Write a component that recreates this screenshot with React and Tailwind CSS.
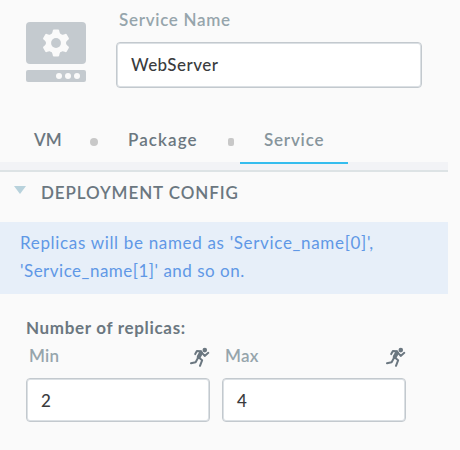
const TEETH = [0, 60, 120, 180, 240, 300];

function Gear() {
  return (
    <svg width="28" height="28" viewBox="-14 -14 28 28" fill="#fafafa">
      {TEETH.map((angle) => (
        <path
          key={angle}
          transform={`rotate(${angle})`}
          d="M-5.6 -8 Q-3.8 -9 -3.5 -11 L-3.2 -12.6 Q-3 -13.6 -2 -13.6 H2 Q3 -13.6 3.2 -12.6 L3.5 -11 Q3.8 -9 5.6 -8 Z"
        />
      ))}
      <circle r="10.2" />
      <circle r="4.9" fill="#c4cacf" />
    </svg>
  );
}

function Runner() {
  return (
    <svg
      className="mt-[1px]"
      width="20"
      height="21"
      viewBox="0 0 20 21"
      fill="none"
      stroke="#6b7780"
      strokeWidth="2"
      strokeLinecap="round"
      strokeLinejoin="round"
    >
      <circle cx="14.8" cy="3.1" r="2.3" fill="#6b7780" stroke="none" />
      <path d="M5.2 7.1 6.9 4.1 11 4.2M12 5.8 14.7 8.9 18.3 5.8" />
      <path d="M11 5.7 8.7 10" strokeWidth="4" />
      <path d="M8.9 10.6 12.1 13.3 10 18.8M7.8 11.2 5.6 15.3 1 16.2" />
    </svg>
  );
}

function ServiceIcon() {
  return (
    <div className="mt-[22px] flex w-[60px] flex-col gap-[6px]">
      <div className="flex h-[42px] items-center justify-center rounded-[4px] bg-[#c4cacf]">
        <Gear />
      </div>
      <div className="flex h-[12px] items-center justify-end gap-[3px] rounded-[2px] bg-[#c4cacf] pr-[6px]">
        <span className="size-[6px] rounded-full bg-[#fafafa]" />
        <span className="size-[6px] rounded-full bg-[#fafafa]" />
        <span className="size-[6px] rounded-full bg-[#fafafa]" />
      </div>
    </div>
  );
}

function ReplicaField({ label, value }) {
  return (
    <div className="w-[184px]">
      <div className="flex h-[32px] justify-between pl-[3px]">
        <span className="text-[17px] leading-[20px] font-semibold tracking-[0.2px] text-[#96a5ac]">{label}</span>
        <Runner />
      </div>
      <div className="flex h-[44px] items-center rounded-[4px] border border-[#c3c9ce] bg-white pt-[2px] pl-[14px] text-[17px] font-medium text-[#3a3b3d] shadow-[inset_0_0_0_1px_#dbe0e4]">
        {value}
      </div>
    </div>
  );
}

export default function App() {
  return (
    <div className="h-[450px] w-[460px] overflow-hidden bg-[#fafafa] font-['Lato',sans-serif]">
      <div className="w-[448px]">
        <header className="flex h-[118px] gap-[30px] pl-[26px]">
          <ServiceIcon />
          <div className="w-[306px]">
            <div className="flex h-[42px] items-start pt-[10px] pl-[3px] text-[17px] leading-[20px] font-semibold tracking-[0.7px] whitespace-nowrap text-[#96a5ac]">
              <span>Service Name</span>
            </div>
            <div className="flex h-[46px] items-center rounded-[4px] border border-[#c3c9ce] bg-white pl-[14px] text-[17px] font-medium tracking-[0.45px] text-[#3a3b3d] shadow-[inset_0_0_0_1px_#dbe0e4]">
              WebServer
            </div>
          </div>
        </header>

        <nav className="flex h-[46px] text-[17px] leading-[20px] font-semibold text-[#6b7780]">
          <div className="w-[90px] pt-[12px] pl-[34px]">VM</div>
          <span className="mt-[20px] size-[8px] rounded-full bg-[#c8c8c8]" />
          <div className="w-[130px] pt-[12px] pl-[30px] tracking-[1.1px]">Package</div>
          <span className="mt-[20px] h-[8px] w-[6px] rounded-[2px] bg-[#c8c8c8]" />
          <div className="ml-[6px] w-[108px] pt-[12px] pl-[24px] tracking-[0.8px] text-[#87959c]">Service</div>
        </nav>
        <div className="-mt-[2px] flex h-[10px] border-b-2 border-[#dde3e5] bg-[#f2f3f6]">
          <span className="ml-[240px] h-[2px] w-[108px] bg-[#35bdee]" />
        </div>

        <div className="flex h-[50px] pl-[14px]">
          <span className="mt-[14px] h-[8px] w-[12px] bg-[#b8d2dc] [clip-path:polygon(0_0,100%_0,50%_100%)]" />
          <h2 className="pt-[11px] pl-[15px] text-[17px] leading-[20px] font-semibold tracking-[0.9px] whitespace-nowrap text-[#6b7780]">
            DEPLOYMENT CONFIG
          </h2>
        </div>

        <p className="h-[72px] bg-[#e7eff9] pt-[7px] pl-[20px] text-[17px] leading-[28px] whitespace-nowrap text-[#6098e6]">
          <span className="tracking-[0.67px]">Replicas will be named as 'Service_name[0]',</span>
          <br />
          <span className="tracking-[0.5px]">'Service_name[1]' and so on.</span>
        </p>

        <section className="pt-[24px] pl-[26px]">
          <h3 className="h-[28px] text-[17px] leading-[20px] font-bold tracking-[0.67px] text-[#6b7780]">
            Number of replicas:
          </h3>
          <div className="flex gap-[12px]">
            <ReplicaField label="Min" value="2" />
            <ReplicaField label="Max" value="4" />
          </div>
        </section>
      </div>
    </div>
  );
}
